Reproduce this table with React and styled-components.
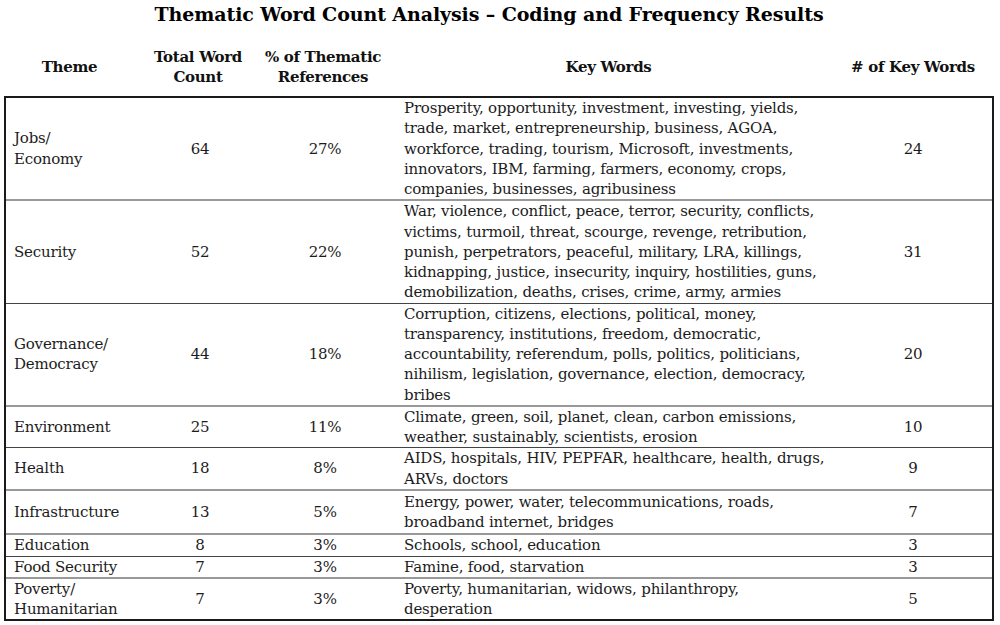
import React from "react";
import styled, { createGlobalStyle } from "styled-components";

const Global = createGlobalStyle`
  html, body { margin: 0; padding: 0; background: #fff; }
  body { font-family: "DejaVu Serif", "Liberation Serif", serif; color: #1c1c1c; }
`;

const Page = styled.div`
  width: 1000px;
  height: 625px;
  overflow: hidden;
  padding: 0 6px 0 4px;
  box-sizing: border-box;
`;

const Title = styled.h1`
  margin: 0;
  height: 28px;
  line-height: 28px;
  font-size: 19px;
  letter-spacing: -0.1px;
  font-weight: bold;
  text-align: center;
  color: #000;
  padding-right: 20px;
`;

const cols = "131px 126px 124px 447px 1fr";

const HeadRow = styled.div`
  display: grid;
  grid-template-columns: ${cols};
  margin-top: 19px;
  margin-bottom: 9px;
  height: 40px;
  font-weight: bold;
  font-size: 15px;
  letter-spacing: -0.3px;
  line-height: 20px;
  color: #111;
`;

const HeadCell = styled.div`
  display: flex;
  align-items: center;
  justify-content: center;
  text-align: center;
`;

const Table = styled.div`
  border: 2px solid #1a1a1a;
  width: 990px;
  box-sizing: border-box;
`;

const Row = styled.div`
  display: grid;
  grid-template-columns: ${cols};
  font-size: 15px;
  letter-spacing: -0.2px;
  line-height: 20.25px;
  padding: ${(p) => (p.$pad ? "1px 0" : "0")};
  border-top: ${(p) => (p.$first ? "none" : p.$dark ? "1px solid #444" : "2px solid #999")};
`;

const Cell = styled.div`
  display: flex;
  flex-direction: column;
  justify-content: center;
  align-items: ${(p) => (p.$left ? "flex-start" : "center")};
  padding-left: ${(p) => p.$pl || 0}px;
`;

const Line = styled.span`
  display: block;
  white-space: nowrap;
`;

const rows = [
  {
    theme: ["Jobs/", "Economy"],
    count: 64,
    pct: "27%",
    words: [
      "Prosperity, opportunity, investment, investing, yields,",
      "trade, market, entrepreneurship, business, AGOA,",
      "workforce, trading, tourism, Microsoft, investments,",
      "innovators, IBM, farming, farmers, economy, crops,",
      "companies, businesses, agribusiness",
    ],
    n: 24,
  },
  {
    theme: ["Security"],
    count: 52,
    pct: "22%",
    words: [
      "War, violence, conflict, peace, terror, security, conflicts,",
      "victims, turmoil, threat, scourge, revenge, retribution,",
      "punish, perpetrators, peaceful, military, LRA, killings,",
      "kidnapping, justice, insecurity, inquiry, hostilities, guns,",
      "demobilization, deaths, crises, crime, army, armies",
    ],
    n: 31,
  },
  {
    theme: ["Governance/", "Democracy"],
    count: 44,
    pct: "18%",
    dark: true,
    words: [
      "Corruption, citizens, elections, political, money,",
      "transparency, institutions, freedom, democratic,",
      "accountability, referendum, polls, politics, politicians,",
      "nihilism, legislation, governance, election, democracy,",
      "bribes",
    ],
    n: 20,
  },
  {
    theme: ["Environment"],
    count: 25,
    pct: "11%",
    words: [
      "Climate, green, soil, planet, clean, carbon emissions,",
      "weather, sustainably, scientists, erosion",
    ],
    n: 10,
  },
  {
    theme: ["Health"],
    count: 18,
    pct: "8%",
    dark: true,
    words: [
      "AIDS, hospitals, HIV, PEPFAR, healthcare, health, drugs,",
      "ARVs, doctors",
    ],
    n: 9,
  },
  {
    theme: ["Infrastructure"],
    count: 13,
    pct: "5%",
    pad: true,
    words: [
      "Energy, power, water, telecommunications, roads,",
      "broadband internet, bridges",
    ],
    n: 7,
  },
  {
    theme: ["Education"],
    count: 8,
    pct: "3%",
    words: ["Schools, school, education"],
    n: 3,
  },
  {
    theme: ["Food Security"],
    count: 7,
    pct: "3%",
    dark: true,
    words: ["Famine, food, starvation"],
    n: 3,
  },
  {
    theme: ["Poverty/", "Humanitarian"],
    count: 7,
    pct: "3%",
    words: ["Poverty, humanitarian, widows, philanthropy,", "desperation"],
    n: 5,
  },
];

export default function App() {
  return (
    <Page>
      <Global />
      <Title>Thematic Word Count Analysis – Coding and Frequency Results</Title>
      <HeadRow>
        <HeadCell>Theme</HeadCell>
        <HeadCell>Total Word<br />Count</HeadCell>
        <HeadCell>% of Thematic<br />References</HeadCell>
        <HeadCell>Key Words</HeadCell>
        <HeadCell>
          # of Key Words
        </HeadCell>
      </HeadRow>
      <Table>
        {rows.map((r, i) => (
          <Row key={i} $first={i === 0} $dark={r.dark} $pad={r.pad}>
            <Cell $left $pl={8}>
              {r.theme.map((t) => (
                <Line key={t}>{t}</Line>
              ))}
            </Cell>
            <Cell>{r.count}</Cell>
            <Cell>{r.pct}</Cell>
            <Cell $left $pl={17}>
              {r.words.map((w, j) => (
                <Line key={j}>{w}</Line>
              ))}
            </Cell>
            <Cell>{r.n}</Cell>
          </Row>
        ))}
      </Table>
    </Page>
  );
}
